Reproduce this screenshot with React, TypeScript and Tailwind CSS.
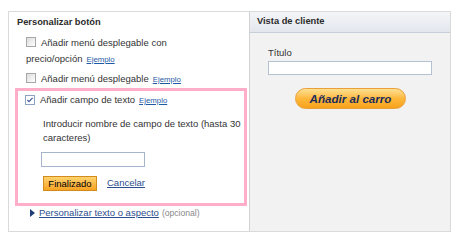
import type { ReactNode } from 'react';

function Box({ checked = false }: { checked?: boolean }) {
  return (
    <span
      className={`inline-flex items-center justify-center w-[10px] h-[10px] align-[-1px] mr-[5px] border ${
        checked ? 'border-[#8ea2c2] bg-white' : 'border-[#a7a7a7] bg-gradient-to-br from-[#dcdcdc] to-[#ffffff]'
      }`}
    >
      {checked && (
        <svg width="8" height="8" viewBox="0 0 8 8">
          <path d="M1.4 4 L3 5.6 L6.6 1.8" fill="none" stroke="#3a5596" strokeWidth="1.1" />
        </svg>
      )}
    </span>
  );
}

function Ejemplo() {
  return <a className="ml-[4px] text-[7.8px] text-[#1f5aa6] underline cursor-pointer">Ejemplo</a>;
}

function Row({ children, className = '' }: { children: ReactNode; className?: string }) {
  return <div className={`leading-[16px] ${className}`}>{children}</div>;
}

export default function App() {
  return (
    <div className="w-[460px] h-[246px] bg-white pt-[11px] pl-[8px] font-['Liberation_Sans',Arial,sans-serif] text-[9.5px] text-[#333]">
      <div className="flex w-[443px] h-[221px] border border-[#dadada]">
        {/* left column */}
        <div className="w-[240px] flex flex-col">
          <div className="h-[22px] flex items-center pl-[8px] font-bold text-[9.3px] text-[#2b2b2b]">
            Personalizar botón
          </div>
          <div className="pl-[17px] pr-[8px] pt-[1px]">
            <Row>
              <Box />
              Añadir menú desplegable con
              <br />
              precio/opción
              <Ejemplo />
            </Row>
            <Row className="mt-[3px]">
              <Box />
              Añadir menú desplegable
              <Ejemplo />
            </Row>
          </div>

          <div className="ml-[6px] mr-[2px] border-[3px] border-[#ffadc8] pl-[7px] pb-[12px]">
            <Row className="pt-[1px]">
              <Box checked />
              Añadir campo de texto
              <Ejemplo />
            </Row>
            <div className="pl-[18px] pt-[8px]">
              <p className="leading-[14px] pr-[2px]">
                Introducir nombre de campo de texto (hasta 30 caracteres)
              </p>
              <div className="-ml-[2px] mt-[7px] w-[104px] h-[15px] border border-[#a5b6cc] bg-white" />
              <div className="flex items-center mt-[9px]">
                <button className="h-[15px] w-[54px] flex items-center justify-center border border-[#d48b1e] bg-gradient-to-b from-[#ffd36b] to-[#f7a31d] text-[9.5px] text-black leading-none">
                  Finalizado
                </button>
                <a className="ml-[10px] text-[#2c4e8e] underline cursor-pointer">Cancelar</a>
              </div>
            </div>
          </div>

          <div className="flex items-center pl-[21px] -mt-[1px] leading-[16px]">
            <svg width="5" height="8" viewBox="0 0 5 8" className="mr-[4px]">
              <path d="M0 0 L5 4 L0 8 Z" fill="#1d3d74" />
            </svg>
            <a className="text-[#2c4e8e] underline cursor-pointer">Personalizar texto o aspecto</a>
            <span className="ml-[3px] text-[8.6px] text-[#8a8a8a]">(opcional)</span>
          </div>
        </div>

        {/* right column */}
        <div className="flex-1 flex flex-col border-l border-[#d2d2d2] bg-[#f2f2f2]">
          <div className="h-[21px] flex items-center pl-[7px] font-bold text-[9.3px] text-[#2b2b2b] bg-gradient-to-b from-[#f4f5f8] to-[#e3e7ed] border-b border-[#c7cfda]">
            Vista de cliente
          </div>
          <div className="pl-[18px] pr-[17px] pt-[13px]">
            <div className="leading-[14px]">Título</div>
            <div className="mt-[1px] w-[164px] h-[14px] border border-[#b4c2d4] bg-white" />
            <div className="flex justify-center mt-[13px]">
              <button className="w-[111px] h-[21px] rounded-full border border-[#eaa03a] bg-gradient-to-b from-[#ffe08f] via-[#fdb83a] to-[#f7a21a] font-bold italic text-[11.6px] text-[#1c2d5c] leading-none">
                Añadir al carro
              </button>
            </div>
          </div>
        </div>
      </div>
    </div>
  );
}
